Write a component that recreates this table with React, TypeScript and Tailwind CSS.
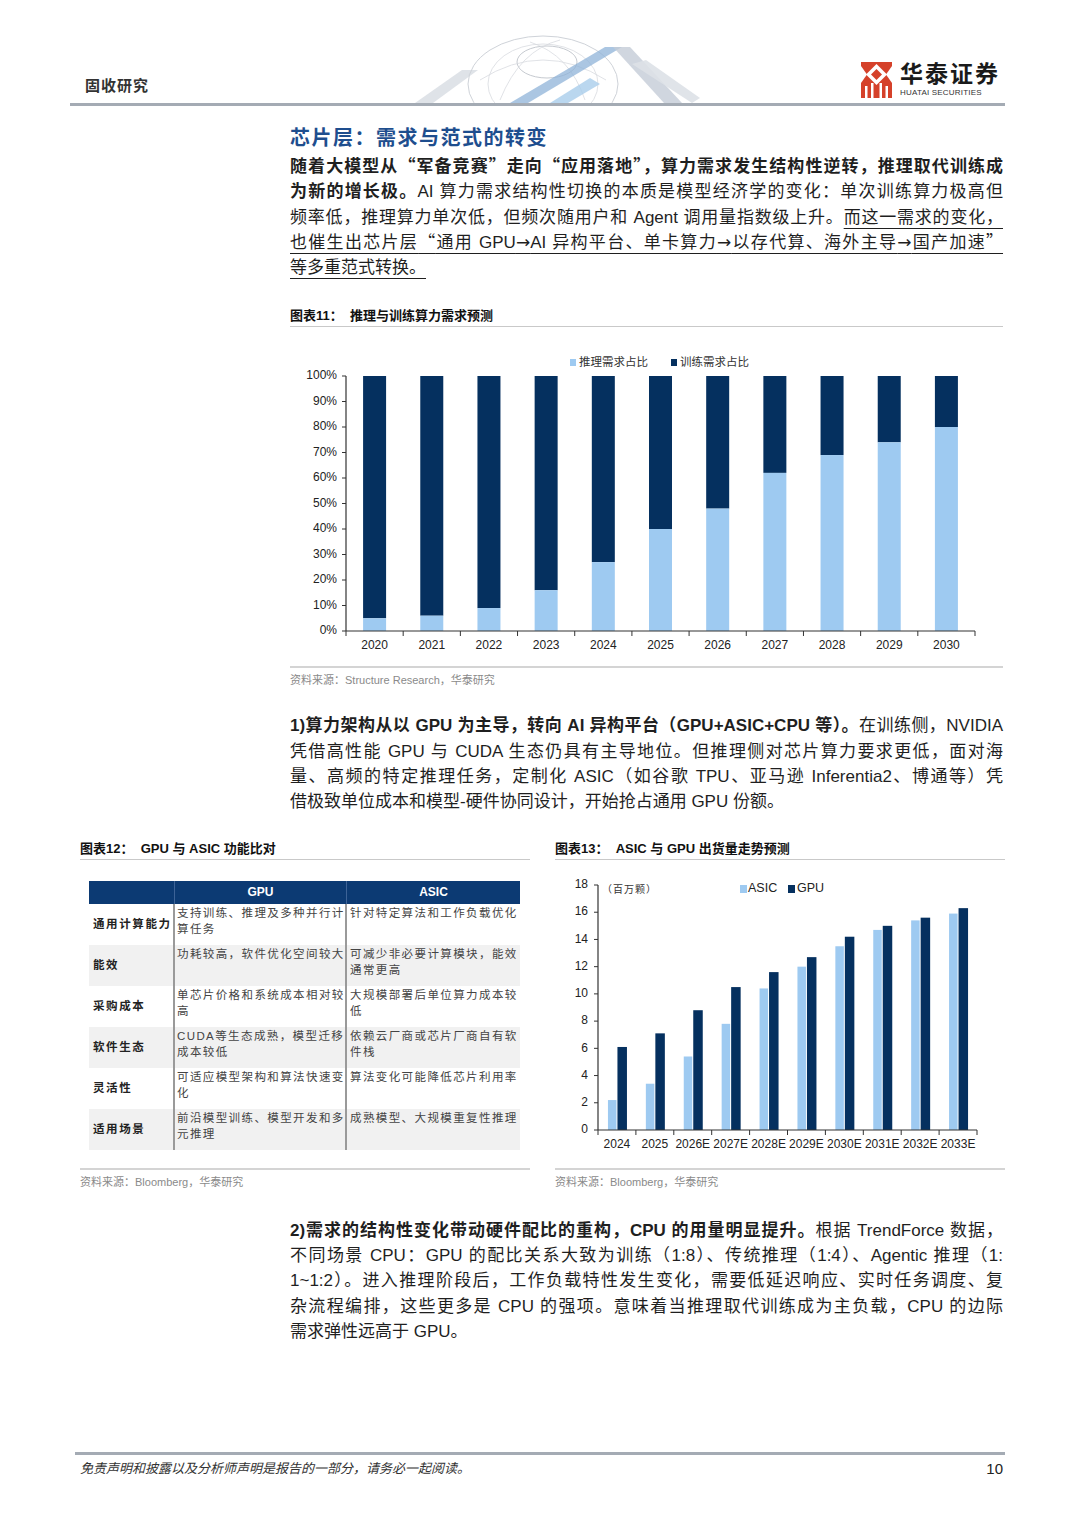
import React from 'react'

const LIGHT = '#9ecaf1'
const DARK = '#05305f'

function Line({ children, last }: { children: React.ReactNode; last?: boolean }) {
  return <div className={last ? 'h-[25.3px]' : 'h-[25.3px] text-justify [text-align-last:justify]'}>{children}</div>
}

// full-width CJK glyphs for quotes and arrows
function Cj({ children }: { children: React.ReactNode }) {
  return <span className="font-['Noto_Sans_CJK_SC',sans-serif] leading-[0]">{children}</span>
}

function Arr() {
  return <span className="font-['DejaVu_Sans',sans-serif] leading-[0]">→</span>
}

function Logo() {
  return (
    <div className="flex items-center gap-[8px]">
      <svg width="31" height="36" viewBox="0 0 31 36">
        <rect x="0" y="0" width="31" height="36" fill="#d5412a" />
        <polygon points="15.5,2 26,12.5 15.5,23 5,12.5" fill="#fff" />
        <polygon points="15.5,7 21,12.5 15.5,18 10,12.5" fill="#d5412a" />
        <polygon points="0,4 6,12.5 0,21" fill="#fff" />
        <polygon points="31,4 25,12.5 31,21" fill="#fff" />
        <rect x="4" y="24" width="2.5" height="12" fill="#fff" />
        <rect x="10" y="21" width="2.5" height="15" fill="#fff" />
        <rect x="18.5" y="21" width="2.5" height="15" fill="#fff" />
        <rect x="24.5" y="24" width="2.5" height="12" fill="#fff" />
      </svg>
      <div className="flex flex-col">
        <span className="text-[23px] leading-[26px] font-bold tracking-[2px] text-[#1a1a1a]">华泰证券</span>
        <span className="text-[8px] leading-[11px] tracking-[0.2px] text-[#333]">HUATAI SECURITIES</span>
      </div>
    </div>
  )
}

function HeaderArt() {
  return (
    <svg width="300" height="83" viewBox="0 0 300 83">
      <polygon points="15,83 62,50 78,50 33,83" fill="#dfe3e8" />
      <ellipse cx="143" cy="64" rx="75" ry="48" fill="none" stroke="#cfd3d9" strokeWidth="1" />
      <ellipse cx="143" cy="64" rx="55" ry="40" fill="none" stroke="#d8dbe0" strokeWidth="0.8" />
      <ellipse cx="147" cy="42" rx="30" ry="16" fill="none" stroke="#c6cad0" strokeWidth="1" />
      <path d="M80,60 Q143,20 206,60" fill="none" stroke="#d8dbe0" strokeWidth="0.8" />
      <path d="M100,80 Q120,30 160,20" fill="none" stroke="#d8dbe0" strokeWidth="0.8" />
      <path d="M185,80 Q170,35 130,22" fill="none" stroke="#d8dbe0" strokeWidth="0.8" />
      <polygon points="150,83 190,58 200,64 168,83" fill="#a9cdeb" opacity="0.8" />
      <polygon points="110,83 205,27 222,27 128,83" fill="#8fb3d8" opacity="0.75" />
      <polygon points="213,27 230,27 282,83 264,83" fill="#c4ccd7" opacity="0.8" />
      <polygon points="232,44 246,40 300,78 292,83" fill="#dde1e7" opacity="0.9" />
    </svg>
  )
}

function TrainChart() {
  const inf = [5, 6, 9, 16, 27, 40, 48, 62, 69, 74, 80]
  const x0 = 56
  const x1 = 685
  const y0 = 303
  const k = 2.55
  const w = (x1 - x0) / inf.length
  return (
    <svg width="713" height="338" viewBox="0 0 713 338" className="block">
      <rect x="280" y="31" width="6" height="7" fill={LIGHT} />
      <text x="289" y="35" dominantBaseline="middle" className="fill-[#333] text-[11.5px]">推理需求占比</text>
      <rect x="381" y="31" width="6" height="7" fill={DARK} />
      <text x="390" y="35" dominantBaseline="middle" className="fill-[#333] text-[11.5px]">训练需求占比</text>
      {Array.from({ length: 11 }).map((_, i) => {
        const v = i * 10
        const y = y0 - v * k
        return (
          <g key={v}>
            <line x1="52" x2={x0} y1={y} y2={y} stroke="#333" strokeWidth="1" />
            <text x="47" y={y} textAnchor="end" dominantBaseline="middle" className="fill-[#222] text-[12px]">
              {v}%
            </text>
          </g>
        )
      })}
      {inf.map((v, i) => {
        const cx = x0 + w * (i + 0.5)
        const yt = y0 - v * k
        return (
          <g key={i}>
            <rect x={cx - 11.5} y={y0 - 100 * k} width="23" height={100 * k - v * k} fill={DARK} />
            <rect x={cx - 11.5} y={yt} width="23" height={v * k} fill={LIGHT} />
            <text x={cx} y="318" textAnchor="middle" dominantBaseline="middle" className="fill-[#222] text-[12px]">
              {2020 + i}
            </text>
          </g>
        )
      })}
      {Array.from({ length: 12 }).map((_, i) => (
        <line key={i} x1={x0 + w * i} x2={x0 + w * i} y1={y0} y2={y0 + 5} stroke="#333" strokeWidth="1" />
      ))}
      <line x1={x0} x2={x0} y1={y0 - 100 * k} y2={y0} stroke="#333" strokeWidth="1.2" />
      <line x1={x0} x2={x1} y1={y0} y2={y0} stroke="#333" strokeWidth="1.2" />
    </svg>
  )
}

function ShipChart() {
  const asic = [2.2, 3.4, 5.4, 7.8, 10.4, 12.0, 13.5, 14.7, 15.4, 15.9]
  const gpu = [6.1, 7.1, 8.8, 10.5, 11.6, 12.7, 14.2, 15.0, 15.6, 16.3]
  const labels = ['2024', '2025', '2026E', '2027E', '2028E', '2029E', '2030E', '2031E', '2032E', '2033E']
  const x0 = 43
  const x1 = 422
  const y0 = 267
  const k = 245 / 18
  const w = (x1 - x0) / labels.length
  return (
    <svg width="450" height="305" viewBox="0 0 450 305" className="block">
      <text x="47" y="27" dominantBaseline="middle" className="fill-[#333] text-[10px] tracking-[1px]">（百万颗）</text>
      <rect x="185" y="22" width="7" height="8" fill={LIGHT} />
      <text x="193" y="26" dominantBaseline="middle" className="fill-[#222] text-[12.5px]">ASIC</text>
      <rect x="233" y="22" width="7" height="8" fill={DARK} />
      <text x="242" y="26" dominantBaseline="middle" className="fill-[#222] text-[12.5px]">GPU</text>
      {Array.from({ length: 10 }).map((_, i) => {
        const v = i * 2
        const y = y0 - v * k
        return (
          <g key={v}>
            <line x1="39" x2={x0} y1={y} y2={y} stroke="#333" strokeWidth="1" />
            <text x="33" y={y} textAnchor="end" dominantBaseline="middle" className="fill-[#222] text-[12px]">
              {v}
            </text>
          </g>
        )
      })}
      {labels.map((l, i) => {
        const cx = x0 + w * (i + 0.5)
        return (
          <g key={l}>
            <rect x={cx - 9} y={y0 - asic[i] * k} width="8.5" height={asic[i] * k} fill={LIGHT} />
            <rect x={cx + 0.5} y={y0 - gpu[i] * k} width="9.5" height={gpu[i] * k} fill={DARK} />
            <text x={cx} y="282" textAnchor="middle" dominantBaseline="middle" className="fill-[#222] text-[12px]">
              {l}
            </text>
          </g>
        )
      })}
      {Array.from({ length: 11 }).map((_, i) => (
        <line key={i} x1={x0 + w * i} x2={x0 + w * i} y1={y0} y2={y0 + 5} stroke="#333" strokeWidth="1" />
      ))}
      <line x1={x0} x2={x0} y1={y0 - 18 * k} y2={y0} stroke="#333" strokeWidth="1.2" />
      <line x1={x0} x2={x1} y1={y0} y2={y0} stroke="#333" strokeWidth="1.2" />
    </svg>
  )
}

const rows: [string, string[], string[]][] = [
  ['通用计算能力', ['支持训练、推理及多种并行计', '算任务'], ['针对特定算法和工作负载优化']],
  ['能效', ['功耗较高，软件优化空间较大'], ['可减少非必要计算模块，能效', '通常更高']],
  ['采购成本', ['单芯片价格和系统成本相对较', '高'], ['大规模部署后单位算力成本较', '低']],
  ['软件生态', ['CUDA等生态成熟，模型迁移', '成本较低'], ['依赖云厂商或芯片厂商自有软', '件栈']],
  ['灵活性', ['可适应模型架构和算法快速变', '化'], ['算法变化可能降低芯片利用率']],
  ['适用场景', ['前沿模型训练、模型开发和多', '元推理'], ['成熟模型、大规模重复性推理']],
]

function CompareTable() {
  return (
    <div className="ml-[9px] w-[431px]">
      <div className="grid h-[23px] grid-cols-[86px_172px_173px] bg-[#0c3a73] text-[12px] font-bold text-white">
        <div className="border-r border-[#3d6397]" />
        <div className="flex items-center justify-center border-r border-[#3d6397]">GPU</div>
        <div className="flex items-center justify-center">ASIC</div>
      </div>
      {rows.map((r, i) => (
        <div
          key={r[0]}
          className={`grid h-[41px] grid-cols-[86px_172px_173px] text-[11.5px] leading-[16px] text-[#444] ${
            i % 2 === 1 ? 'bg-[#f1f1f1]' : 'bg-white'
          }`}
        >
          <div className="flex items-center border-r-2 border-[#9a9a9a] pl-[4px] font-bold tracking-[1.6px] text-[#222]">
            {r[0]}
          </div>
          <div className="border-r-2 border-[#9a9a9a] pt-[1px] pl-[2px] tracking-[1.4px]">
            {r[1].map((t) => (
              <div key={t}>{t}</div>
            ))}
          </div>
          <div className="pt-[1px] pl-[3px] tracking-[1.4px]">
            {r[2].map((t) => (
              <div key={t}>{t}</div>
            ))}
          </div>
        </div>
      ))}
    </div>
  )
}

function Source({ children }: { children: React.ReactNode }) {
  return (
    <div className="border-t-2 border-[#d4d4d4] pt-[4px] text-[11px] leading-[16px] text-[#8a8a8a]">{children}</div>
  )
}

export default function App() {
  return (
    <div className="relative h-[1527px] w-[1080px] overflow-hidden bg-white font-['Liberation_Sans','Noto_Sans_CJK_SC',sans-serif] text-[#1f1f1f]">
      <header className="ml-[70px] flex h-[106px] w-[935px] items-end border-b-[3px] border-[#a4abb4]">
        <div className="w-[330px] pb-[7px] pl-[15px] text-[15px] leading-[20px] font-bold tracking-[1px] text-[#333]">
          固收研究
        </div>
        <HeaderArt />
        <div className="flex-1" />
        <div className="pr-[5px] pb-[5px]">
          <Logo />
        </div>
      </header>

      <main className="ml-[290px] w-[713px]">
        <h1 className="mt-[18px] text-[20px] leading-[28px] font-bold tracking-[1.5px] text-[#1e4e8e]">
          芯片层：需求与范式的转变
        </h1>
        <div className="mt-[2px] text-[17px] leading-[25.3px]">
          <Line>
            <b>
              随着大模型从<Cj>“</Cj>军备竞赛<Cj>”</Cj>走向<Cj>“</Cj>应用落地<Cj>”</Cj>，算力需求发生结构性逆转，推理取代训练成
            </b>
          </Line>
          <Line>
            <b>为新的增长极。</b>AI 算力需求结构性切换的本质是模型经济学的变化：单次训练算力极高但
          </Line>
          <Line>
            频率低，推理算力单次低，但频次随用户和 Agent 调用量指数级上升。
            <span className="underline decoration-1 underline-offset-[5px]">而这一需求的变化，</span>
          </Line>
          <Line>
            <span className="underline decoration-1 underline-offset-[5px]">
              也催生出芯片层<Cj>“</Cj>通用 GPU<Arr />AI 异构平台、单卡算力<Arr />以存代算、海外主导<Arr />国产加速<Cj>”</Cj>
            </span>
          </Line>
          <Line last>
            <span className="underline decoration-1 underline-offset-[5px]">等多重范式转换。</span>
          </Line>
        </div>

        <div className="mt-[27px] border-b border-[#c9c9c9] pb-[1px] text-[13px] leading-[18px] font-bold text-[#111]">
          图表11：&nbsp; 推理与训练算力需求预测
        </div>
        <div className="mt-[1px]">
          <TrainChart />
        </div>
        <Source>资料来源：Structure Research，华泰研究</Source>

        <div className="mt-[25px] text-[17px] leading-[25.3px]">
          <Line>
            <b>1)算力架构从以 GPU 为主导，转向 AI 异构平台（GPU+ASIC+CPU 等）。</b>在训练侧，NVIDIA
          </Line>
          <Line>凭借高性能 GPU 与 CUDA 生态仍具有主导地位。但推理侧对芯片算力要求更低，面对海</Line>
          <Line>量、高频的特定推理任务，定制化 ASIC（如谷歌 TPU、亚马逊 Inferentia2、博通等）凭</Line>
          <Line last>借极致单位成本和模型-硬件协同设计，开始抢占通用 GPU 份额。</Line>
        </div>
      </main>

      <section className="mt-[25px] ml-[80px] flex w-[925px] gap-[25px]">
        <div className="w-[450px]">
          <div className="border-b border-[#c9c9c9] pb-[1px] text-[13px] leading-[18px] font-bold text-[#111]">
            图表12：&nbsp; GPU 与 ASIC 功能比对
          </div>
          <div className="mt-[21px] h-[287px]">
            <CompareTable />
          </div>
          <Source>资料来源：Bloomberg，华泰研究</Source>
        </div>
        <div className="w-[450px]">
          <div className="border-b border-[#c9c9c9] pb-[1px] text-[13px] leading-[18px] font-bold text-[#111]">
            图表13：&nbsp; ASIC 与 GPU 出货量走势预测
          </div>
          <div className="mt-[3px]">
            <ShipChart />
          </div>
          <Source>资料来源：Bloomberg，华泰研究</Source>
        </div>
      </section>

      <div className="mt-[28px] ml-[290px] w-[713px] text-[17px] leading-[25.3px]">
        <Line>
          <b>2)需求的结构性变化带动硬件配比的重构，CPU 的用量明显提升。</b>根据 TrendForce 数据，
        </Line>
        <Line>不同场景 CPU：GPU 的配比关系大致为训练（1:8）、传统推理（1:4）、Agentic 推理（1:</Line>
        <Line>1~1:2）。进入推理阶段后，工作负载特性发生变化，需要低延迟响应、实时任务调度、复</Line>
        <Line>杂流程编排，这些更多是 CPU 的强项。意味着当推理取代训练成为主负载，CPU 的边际</Line>
        <Line last>需求弹性远高于 GPU。</Line>
      </div>

      <footer className="absolute top-[1452px] left-[75px] w-[930px] border-t-[3px] border-[#a4abb4] pt-[5px]">
        <div className="flex items-center justify-between text-[13px] leading-[18px] text-[#333]">
          <span className="pl-[5px] italic">免责声明和披露以及分析师声明是报告的一部分，请务必一起阅读。</span>
          <span className="pr-[2px] text-[15px] text-[#222]">10</span>
        </div>
      </footer>
    </div>
  )
}
